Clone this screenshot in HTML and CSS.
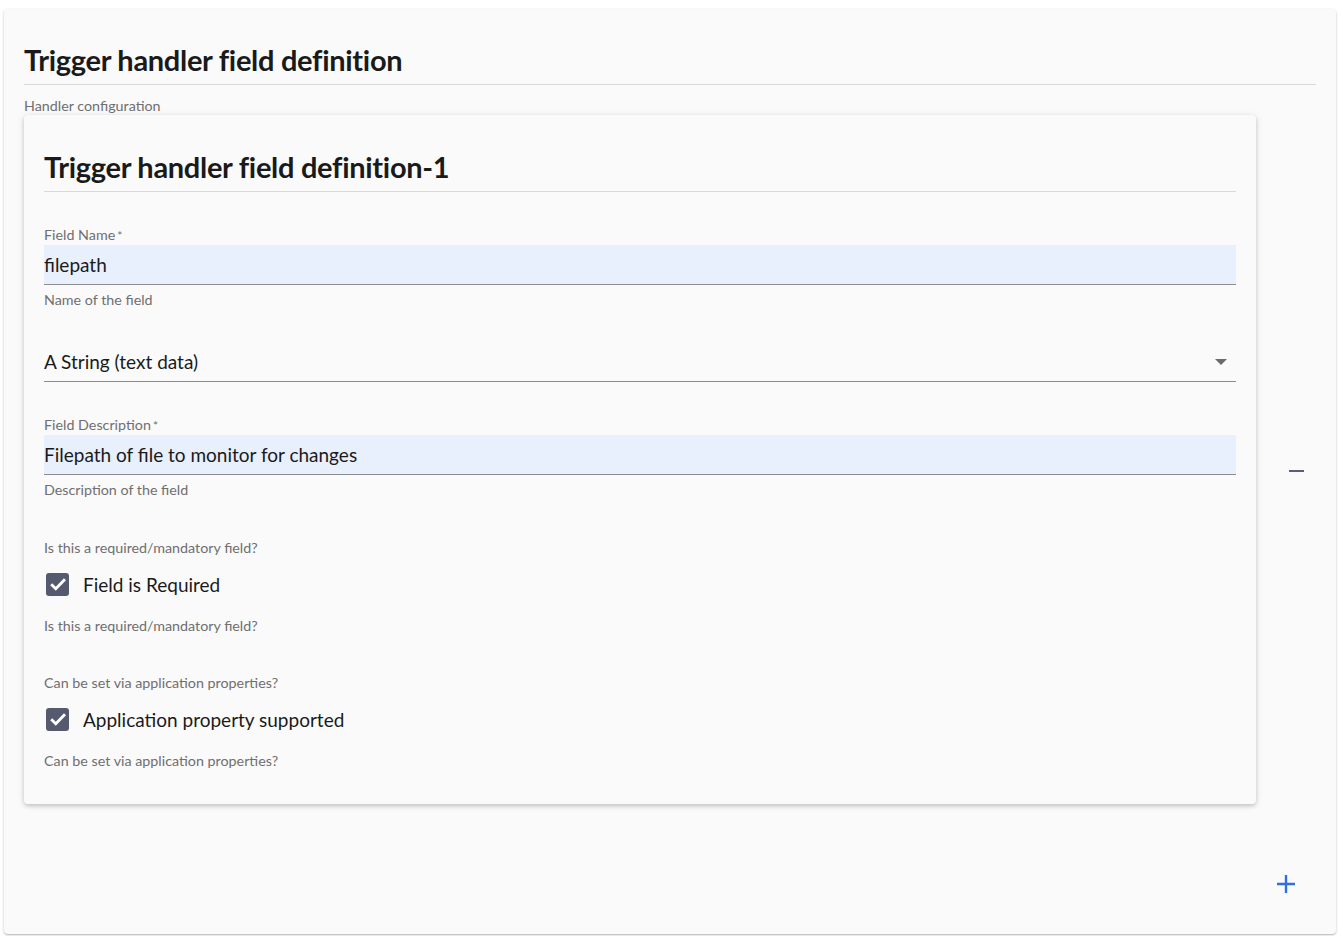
FILE: index.html
```html
<!DOCTYPE html>
<html lang="en">
<head>
<meta charset="utf-8">
<title>Trigger handler field definition</title>
<link rel="stylesheet" href="styles.css">
</head>
<body>
<div class="page">
  <section class="outer">
    <h1 class="title">Trigger handler field definition</h1>
    <div class="caption">Handler configuration</div>
    <div class="row">
      <div class="card">
        <h2 class="title">Trigger handler field definition-1</h2>
        <div class="field">
          <label class="label">Field Name<span class="req">*</span></label>
          <div class="input filled">filepath</div>
          <div class="help">Name of the field</div>
        </div>
        <div class="field select-field">
          <div class="input select">
            <span>A String (text data)</span>
            <svg class="arrow" width="12" height="6" viewBox="0 0 12 6"><path d="M0 0h12L6 6z" fill="#6b6b6b"/></svg>
          </div>
        </div>
        <div class="field">
          <label class="label">Field Description<span class="req">*</span></label>
          <div class="input filled">Filepath of file to monitor for changes</div>
          <div class="help">Description of the field</div>
        </div>
        <div class="field check-field">
          <div class="help top">Is this a required/mandatory field?</div>
          <div class="check">
            <span class="box"><svg width="16" height="14" viewBox="0 0 16 14"><path d="M1.2 7.2l4.6 4.6L15 2.2" stroke="#fff" stroke-width="2.8" fill="none"/></svg></span>
            <span class="check-label">Field is Required</span>
          </div>
          <div class="help">Is this a required/mandatory field?</div>
        </div>
        <div class="field check-field">
          <div class="help top">Can be set via application properties?</div>
          <div class="check">
            <span class="box"><svg width="16" height="14" viewBox="0 0 16 14"><path d="M1.2 7.2l4.6 4.6L15 2.2" stroke="#fff" stroke-width="2.8" fill="none"/></svg></span>
            <span class="check-label">Application property supported</span>
          </div>
          <div class="help">Can be set via application properties?</div>
        </div>
      </div>
      <div class="side">
        <button class="icon-btn minus" aria-label="remove"><svg width="15" height="2" viewBox="0 0 15 2"><rect width="15" height="2" fill="#5b5f73"/></svg></button>
      </div>
    </div>
    <div class="add-row">
      <button class="icon-btn plus" aria-label="add"><svg width="18" height="18" viewBox="0 0 18 18"><path d="M9 0v18M0 9h18" stroke="#2f6fe4" stroke-width="2.4"/></svg></button>
    </div>
  </section>
</div>
</body>
</html>
```

FILE: styles.css
```css
* { box-sizing: border-box; }
html, body { margin: 0; padding: 0; background: #ffffff; }
body { font-family: Lato, "Noto Sans", sans-serif; color: #1c1c1c; }
.page { padding: 9px 7px 2px 4px; }
.outer {
  background: #fafafa;
  border-radius: 4px;
  box-shadow: 0 1px 3px rgba(0,0,0,0.2), 0 1px 1px rgba(0,0,0,0.12);
  padding: 33px 20px 36px 20px;
  min-height: 925px;
}
.title {
  font-size: 29px;
  font-weight: 700;
  margin: 0;
  padding-bottom: 7px;
  border-bottom: 1px solid #d9d9d9;
  line-height: 35px;
  color: #1a1a1a;
  letter-spacing: -0.3px;
}
.caption { font-size: 14.3px; color: #6f6f6f; margin-top: 12px; line-height: 18px; }
.row { display: flex; align-items: stretch; }
.card {
  width: 1232px;
  background: #fafafa;
  border-radius: 4px;
  box-shadow: 0 2px 4px rgba(0,0,0,0.18), 0 1px 8px rgba(0,0,0,0.08);
  padding: 34px 20px 34px 20px;
}
.side { flex: 1; display: flex; align-items: center; justify-content: center; padding-left: 20px; }
.icon-btn { border: 0; background: none; padding: 0; cursor: pointer; display: flex; }
.minus { margin-top: 22px; margin-left: 1px; }
.field { margin-top: 34px; }
.label { display: block; font-size: 14.3px; color: #6f6f6f; line-height: 18px; }
.req { margin-left: 2px; font-size: 12px; }
.input {
  font-size: 19px;
  line-height: 39px;
  height: 40px;
  border-bottom: 1px solid #8c8c8c;
  color: #1a1a1a;
}
.filled { background: #e8f0fe; }
.help { font-size: 14.3px; color: #6f6f6f; line-height: 18px; margin-top: 6px; }
.select-field { margin-top: 33px; }
.select { display: flex; justify-content: space-between; align-items: center; }
.arrow { margin-right: 9px; }
.check-field { margin-top: 40px; }
.check-field + .check-field { margin-top: 39px; }
.check-field .help.top { margin-top: 0; }
.check { display: flex; align-items: center; margin-top: 15px; height: 24px; }
.box {
  width: 23px; height: 23px; margin-left: 2px;
  background: #565a6e; border-radius: 3px;
  display: flex; align-items: center; justify-content: center;
}
.check-label { font-size: 19px; margin-left: 14px; color: #1a1a1a; }
.check + .help { margin-top: 21px; }
.add-row { display: flex; justify-content: flex-end; padding-right: 21px; margin-top: 71px; }
```
